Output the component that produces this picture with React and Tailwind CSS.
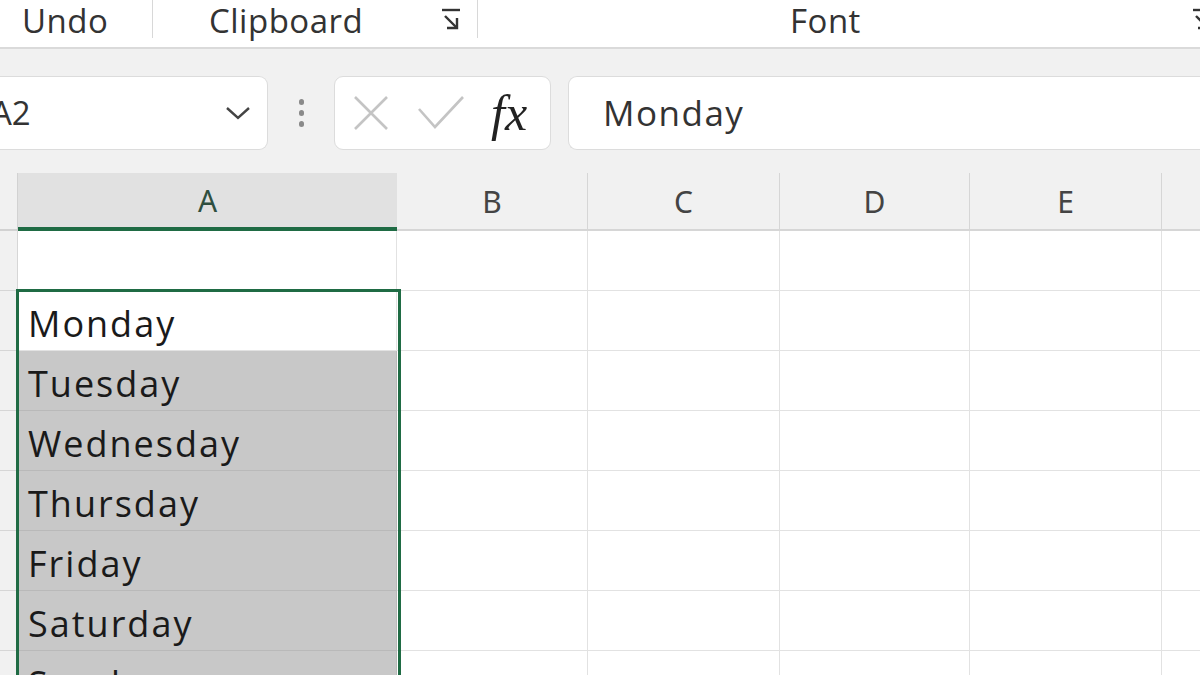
import React from 'react';

const cols = [
  { key: 'A', w: 'w-[379px]' },
  { key: 'B', w: 'w-[191px]' },
  { key: 'C', w: 'w-[192px]' },
  { key: 'D', w: 'w-[190px]' },
  { key: 'E', w: 'w-[192px]' },
  { key: 'F', w: 'w-[60px]' },
];

const days = ['', 'Monday', 'Tuesday', 'Wednesday', 'Thursday', 'Friday', 'Saturday', 'Sunday'];

function LauncherIcon({ className }) {
  return (
    <svg className={className} viewBox="0 0 24 26" fill="none" stroke="#333" strokeWidth="2.4">
      <path d="M3 3h18" />
      <path d="M6 9l11 11" />
      <path d="M8 21h10v-10" />
    </svg>
  );
}

function Cell({ col, row, text }) {
  const selected = col === 'A' && row >= 2;
  const active = col === 'A' && row === 2;
  const bg = selected && !active ? 'bg-[#c8c8c8] border-[#b9b9b9]' : 'bg-white border-[#e2e2e2]';
  const c = cols.find((x) => x.key === col);
  return (
    <div className={`${c.w} h-[60px] shrink-0 border-r border-b ${bg} flex items-center pl-[10px] pt-[6px]`}>
      {text && (
        <span className="text-[36px] font-medium tracking-[2px] text-[#1a1a1a] leading-none">{text}</span>
      )}
    </div>
  );
}

export default function App() {
  return (
    <div className="w-[1200px] h-[675px] overflow-hidden bg-white relative" style={{ fontFamily: '"Open Sans", "Noto Sans", sans-serif' }}>
      {/* ribbon group labels */}
      <div className="h-[49px] flex items-start border-b-2 border-[#dadada] text-[#333] text-[33px] tracking-[0.5px] leading-none">
        <div className="w-[153px] pl-[22px] h-[38px] flex items-center border-r border-[#d8d8d8] pt-[2px]">Undo</div>
        <div className="w-[325px] pl-[56px] h-[38px] flex items-center border-r border-[#d8d8d8] pt-[2px]">
          <span className="w-[230px]">Clipboard</span>
          <LauncherIcon className="w-[24px] h-[26px]" />
        </div>
        <div className="flex-1 h-[38px] flex items-center pt-[2px]">
          <span className="ml-[312px]">Font</span>
          <LauncherIcon className="w-[24px] h-[26px] ml-auto -mr-[14px]" />
        </div>
      </div>

      {/* formula bar */}
      <div className="bg-[#f1f1f1] h-[124px] flex items-start pt-[27px]">
        <div className="w-[269px] h-[74px] bg-white rounded-r-[9px] border border-l-0 border-[#dcdcdc] flex items-center justify-between pr-[16px] -ml-px">
          <span className="text-[33px] text-[#333] -ml-[8px]">A2</span>
          <svg className="w-[26px] h-[16px]" viewBox="0 0 26 16" fill="none" stroke="#444" strokeWidth="2.4">
            <path d="M2 3l11 10L24 3" />
          </svg>
        </div>
        <div className="w-[66px] h-[74px] flex flex-col items-center justify-center gap-[5px]">
          <span className="w-[5px] h-[6px] bg-[#8a8a8a] rounded-sm" />
          <span className="w-[5px] h-[6px] bg-[#8a8a8a] rounded-sm" />
          <span className="w-[5px] h-[6px] bg-[#8a8a8a] rounded-sm" />
        </div>
        <div className="w-[217px] h-[74px] bg-white rounded-[9px] border border-[#dcdcdc] flex items-center pl-[16px]">
          <svg className="w-[40px] h-[40px]" viewBox="0 0 40 40" fill="none" stroke="#c4c4c4" strokeWidth="2.6">
            <path d="M4 4l32 32M36 4L4 36" />
          </svg>
          <svg className="w-[48px] h-[36px] ml-[26px]" viewBox="0 0 48 36" fill="none" stroke="#c4c4c4" strokeWidth="2.6">
            <path d="M2 14l16 18L46 2" />
          </svg>
          <span className="ml-[26px] text-[50px] italic text-[#222] leading-none" style={{ fontFamily: '"Liberation Serif", serif' }}>fx</span>
        </div>
        <div className="flex-1 h-[74px] bg-white rounded-l-[9px] border border-r-0 border-[#dcdcdc] ml-[17px] flex items-center pl-[34px]">
          <span className="text-[35px] tracking-[1.5px] text-[#333]">Monday</span>
        </div>
      </div>

      {/* grid */}
      <div className="relative">
        <div className="flex h-[58px] bg-[#f1f1f1]">
          <div className="w-[18px] shrink-0 border-r border-[#d2d2d2] border-b-2" />
          {cols.map((c) => (
            <div
              key={c.key}
              className={`${c.w} shrink-0 flex items-center justify-center text-[30px] ${
                c.key === 'A'
                  ? 'bg-[#e1e1e1] border-b-[4px] border-[#1f6b44] text-[#2f4f3f]'
                  : 'border-r border-b-2 border-[#d6d6d6] text-[#444]'
              }`}
              style={{ fontFamily: '"Noto Sans", sans-serif' }}
            >
              {c.key !== 'F' ? c.key : ''}
            </div>
          ))}
        </div>
        {days.map((d, i) => (
          <div key={i} className="flex">
            <div className="w-[18px] h-[60px] shrink-0 bg-[#f1f1f1] border-r border-b border-[#d6d6d6]" />
            {cols.map((c) => (
              <Cell key={c.key} col={c.key} row={i + 1} text={c.key === 'A' ? d : ''} />
            ))}
          </div>
        ))}
        {/* selection outline */}
        <div className="absolute left-[16px] top-[116px] w-[385px] h-[460px] border-[3px] border-[#1f6b44] pointer-events-none" />
      </div>
    </div>
  );
}
